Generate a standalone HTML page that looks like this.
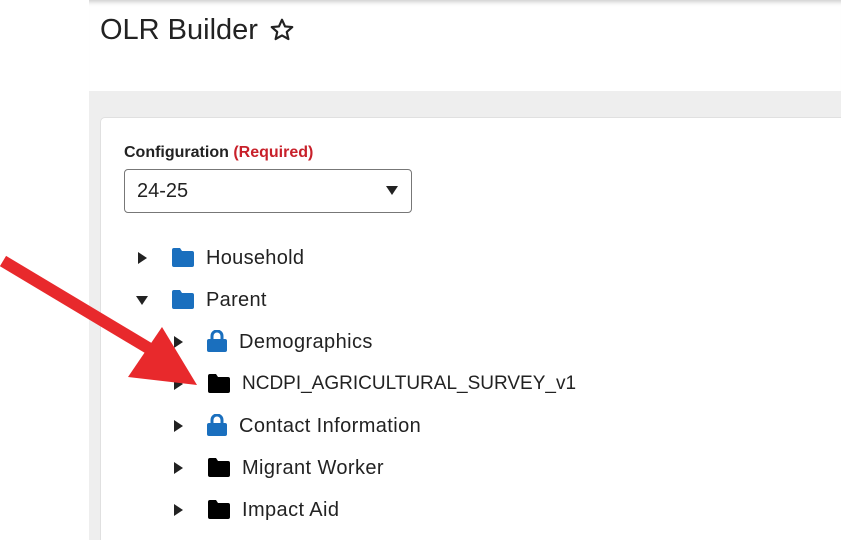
<!DOCTYPE html><html style="overflow:hidden"><head><style>
body{margin:0;width:841px;height:540px;overflow:hidden;background:#fff;font-family:"Liberation Sans",sans-serif;position:relative;color:#222}
.hdr{position:absolute;left:89px;top:0;width:752px;height:91px;background:#fff;box-shadow:inset 0 6px 5px -4px #ccc;border-bottom:1px solid #ddd}
.gray{position:absolute;left:89px;top:91px;width:752px;height:449px;background:#eee}
.card{position:absolute;left:100px;top:117px;width:745px;height:430px;background:#fff;border-radius:5px;border:1px solid #e0e0e0}
.t{position:absolute;font-size:20px;line-height:20px;white-space:nowrap}
.tri{position:absolute;width:0;height:0;border-top:6px solid transparent;border-bottom:6px solid transparent;border-left:9px solid #222}
.down{position:absolute;width:0;height:0;border-left:6px solid transparent;border-right:6px solid transparent;border-top:9px solid #222}
</style></head><body>
<div class="hdr"></div>
<div class="gray"></div>
<div class="card"></div>
<div class="t" style="left:100px;top:14px;font-size:29px;line-height:32px;color:#222">OLR Builder</div>
<svg style="position:absolute;left:269px;top:17px" width="26" height="26" viewBox="0 0 24 24"><path d="M12 2.5l2.8 6.2 6.7.6-5.1 4.5 1.5 6.6L12 17l-5.9 3.4 1.5-6.6-5.1-4.5 6.7-.6z" fill="none" stroke="#222" stroke-width="2" stroke-linejoin="round"/></svg>
<div class="t" style="left:124px;top:143px;font-size:16px;font-weight:bold">Configuration <span style="color:#c8202a">(Required)</span></div>
<div style="position:absolute;left:124px;top:169px;width:286px;height:42px;border:1px solid #777;border-radius:4px;background:#fff"></div>
<div class="t" style="left:137px;top:181px;font-size:20px">24-25</div>
<div class="down" style="left:386px;top:186px"></div>

<div class="tri" style="left:138px;top:252px"></div>
<svg style="position:absolute;left:172px;top:248px" width="22" height="19" viewBox="0 0 22 19"><path d="M2 0h6l2 3h10a2 2 0 0 1 2 2v12a2 2 0 0 1-2 2H2a2 2 0 0 1-2-2V2a2 2 0 0 1 2-2z" fill="#1a6fbe"/></svg>
<div class="t" style="left:206px;top:248px;letter-spacing:0.3px">Household</div>

<div class="down" style="left:136px;top:296px"></div>
<svg style="position:absolute;left:172px;top:290px" width="22" height="19" viewBox="0 0 22 19"><path d="M2 0h6l2 3h10a2 2 0 0 1 2 2v12a2 2 0 0 1-2 2H2a2 2 0 0 1-2-2V2a2 2 0 0 1 2-2z" fill="#1a6fbe"/></svg>
<div class="t" style="left:206px;top:290px;letter-spacing:0.3px">Parent</div>

<div class="tri" style="left:174px;top:336px"></div>
<svg style="position:absolute;left:207px;top:330px" width="20" height="22" viewBox="0 0 20 22"><path d="M5 10V6a5 5 0 0 1 10 0v4" fill="none" stroke="#1a6fbe" stroke-width="3"/><rect x="0" y="9" width="20" height="13" rx="2" fill="#1a6fbe"/></svg>
<div class="t" style="left:239px;top:332px;letter-spacing:0.4px">Demographics</div>

<div class="tri" style="left:174px;top:378px"></div>
<svg style="position:absolute;left:208px;top:374px" width="22" height="19" viewBox="0 0 22 19"><path d="M2 0h6l2 3h10a2 2 0 0 1 2 2v12a2 2 0 0 1-2 2H2a2 2 0 0 1-2-2V2a2 2 0 0 1 2-2z" fill="#000"/></svg>
<div class="t" style="left:242px;top:374px;font-size:19px">NCDPI_AGRICULTURAL_SURVEY_v1</div>

<div class="tri" style="left:174px;top:420px"></div>
<svg style="position:absolute;left:207px;top:414px" width="20" height="22" viewBox="0 0 20 22"><path d="M5 10V6a5 5 0 0 1 10 0v4" fill="none" stroke="#1a6fbe" stroke-width="3"/><rect x="0" y="9" width="20" height="13" rx="2" fill="#1a6fbe"/></svg>
<div class="t" style="left:239px;top:416px;letter-spacing:0.4px">Contact Information</div>

<div class="tri" style="left:174px;top:462px"></div>
<svg style="position:absolute;left:208px;top:458px" width="22" height="19" viewBox="0 0 22 19"><path d="M2 0h6l2 3h10a2 2 0 0 1 2 2v12a2 2 0 0 1-2 2H2a2 2 0 0 1-2-2V2a2 2 0 0 1 2-2z" fill="#000"/></svg>
<div class="t" style="left:242px;top:458px;letter-spacing:0.4px">Migrant Worker</div>

<div class="tri" style="left:174px;top:504px"></div>
<svg style="position:absolute;left:208px;top:500px" width="22" height="19" viewBox="0 0 22 19"><path d="M2 0h6l2 3h10a2 2 0 0 1 2 2v12a2 2 0 0 1-2 2H2a2 2 0 0 1-2-2V2a2 2 0 0 1 2-2z" fill="#000"/></svg>
<div class="t" style="left:242px;top:500px;letter-spacing:0.4px">Impact Aid</div>

<svg style="position:absolute;left:0;top:0" width="841" height="540"><line x1="3" y1="261" x2="155" y2="352" stroke="#e8292c" stroke-width="12"/><polygon points="128,377 197,385 162,327" fill="#e8292c"/></svg>
</body></html>
